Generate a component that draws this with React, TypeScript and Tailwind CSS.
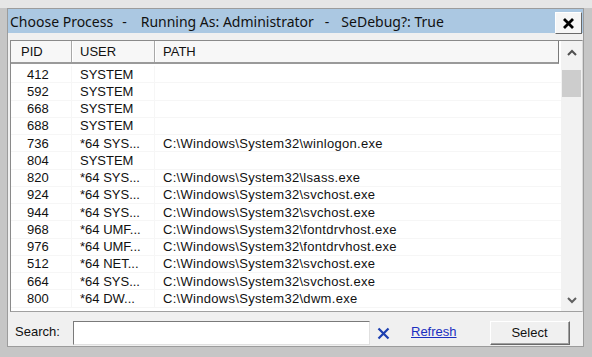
import React from 'react'

const rows = [
  { pid: '412', user: 'SYSTEM', path: '' },
  { pid: '592', user: 'SYSTEM', path: '' },
  { pid: '668', user: 'SYSTEM', path: '' },
  { pid: '688', user: 'SYSTEM', path: '' },
  { pid: '736', user: '*64 SYS...', path: 'C:\\Windows\\System32\\winlogon.exe' },
  { pid: '804', user: 'SYSTEM', path: '' },
  { pid: '820', user: '*64 SYS...', path: 'C:\\Windows\\System32\\lsass.exe' },
  { pid: '924', user: '*64 SYS...', path: 'C:\\Windows\\System32\\svchost.exe' },
  { pid: '944', user: '*64 SYS...', path: 'C:\\Windows\\System32\\svchost.exe' },
  { pid: '968', user: '*64 UMF...', path: 'C:\\Windows\\System32\\fontdrvhost.exe' },
  { pid: '976', user: '*64 UMF...', path: 'C:\\Windows\\System32\\fontdrvhost.exe' },
  { pid: '512', user: '*64 NET...', path: 'C:\\Windows\\System32\\svchost.exe' },
  { pid: '664', user: '*64 SYS...', path: 'C:\\Windows\\System32\\svchost.exe' },
  { pid: '800', user: '*64 DW...', path: 'C:\\Windows\\System32\\dwm.exe' },
]

export default function App() {
  return (
    <div className="w-[592px] h-[357px] overflow-hidden bg-[#c6c6c6] border-t-[8px] border-t-[#e6e6e6] flex pl-[7px] pr-[8px] pb-[10px] font-['Liberation_Sans',Arial,sans-serif] text-[13px] text-[#111]">
      <div className="flex-1 flex flex-col bg-[#f0f0f0] border border-[#9c9c9c]">
        {/* title bar */}
        <div className="relative h-[24px] shrink-0 bg-[#abc8e2] flex items-center pl-[2px] font-['Noto_Sans',sans-serif] text-[14px] text-[#111] whitespace-pre">
          <span>Choose Process</span>
          <span className="ml-[9px]">-</span>
          <span className="ml-[14px]">Running As: Administrator</span>
          <span className="ml-[11px]">-</span>
          <span className="ml-[12px]">SeDebug?: True</span>
          <div className="absolute right-[1px] top-[3px] w-[27px] h-[22px] bg-[#f6f6f6] border border-t-[#ffffff] border-l-[#ffffff] border-r-[#6a6a6a] border-b-[#6a6a6a] flex items-center justify-center">
            <svg width="13" height="13" viewBox="0 0 13 13">
              <path d="M2 2 L11 11 M11 2 L2 11" stroke="#000" strokeWidth="2.8" />
            </svg>
          </div>
        </div>

        {/* list */}
        <div className="ml-[2px] mt-[7px] h-[272px] shrink-0 flex border border-t-[#8a8a8a] border-l-[#8a8a8a] border-r-[#d8d8d8] border-b-[#a0a0a0] bg-white">
          <div className="flex-1 flex flex-col overflow-hidden">
            <div className="h-[23px] shrink-0 flex mr-[2px] bg-[#f7f7f7] border-b-2 border-b-[#9a9a9a] border-r border-r-[#7a7a7a]">
              <div className="w-[61px] pl-[10px] flex items-center border-r border-r-[#a8a8a8] shadow-[1px_0_0_#ffffff]">PID</div>
              <div className="w-[83px] pl-[8px] flex items-center border-r border-r-[#a8a8a8] shadow-[1px_0_0_#ffffff]">USER</div>
              <div className="flex-1 pl-[8px] flex items-center">PATH</div>
            </div>
            <div className="pt-[2px] flex flex-col">
              {rows.map((r, i) => (
                <div key={i} className="h-[17.25px] shrink-0 flex items-center border-b border-b-[#f6f6f6] leading-none">
                  <div className="w-[61px] h-full pl-[16px] flex items-center border-r border-r-[#f6f6f6]">{r.pid}</div>
                  <div className="w-[83px] h-full pl-[8px] flex items-center border-r border-r-[#f6f6f6]">{r.user}</div>
                  <div className="flex-1 h-full pl-[8px] flex items-center tracking-[0.3px]">{r.path}</div>
                </div>
              ))}
            </div>
          </div>
          {/* scrollbar */}
          <div className="w-[21px] shrink-0 flex flex-col bg-[#f2f2f2]">
            <div className="h-[22px] flex items-center justify-center">
              <svg width="10" height="7" viewBox="0 0 10 7">
                <path d="M1 6 L5 2 L9 6" stroke="#505050" strokeWidth="2" fill="none" />
              </svg>
            </div>
            <div className="mt-[7px] mx-[1px] h-[27px] bg-[#cdcdcd]" />
            <div className="flex-1" />
            <div className="h-[22px] flex items-center justify-center">
              <svg width="10" height="7" viewBox="0 0 10 7">
                <path d="M1 1 L5 5 L9 1" stroke="#606060" strokeWidth="2" fill="none" />
              </svg>
            </div>
          </div>
        </div>

        {/* bottom bar */}
        <div className="flex items-center mt-[9px] h-[24px] pl-[7px]">
          <span className="w-[58px] -mt-[2px]">Search:</span>
          <div className="w-[297px] h-[24px] bg-white border border-t-[#7a7a7a] border-l-[#7a7a7a] border-r-[#e0e0e0] border-b-[#e0e0e0]" />
          <svg className="ml-[7px]" width="13" height="13" viewBox="0 0 13 13">
            <path d="M1.5 1.5 L11.5 11.5 M11.5 1.5 L1.5 11.5" stroke="#1c3fb0" strokeWidth="2.2" />
          </svg>
          <span className="ml-[21px] -mt-[2px] text-[#1a2fc0] underline">Refresh</span>
          <div className="ml-[33px] w-[80px] h-[24px] flex items-center justify-center bg-[#f0f0f0] border border-t-[#ffffff] border-l-[#ffffff] border-r-[#6a6a6a] border-b-[#6a6a6a] shadow-[inset_-1px_-1px_0_#a0a0a0]">
            Select
          </div>
        </div>
      </div>
    </div>
  )
}
